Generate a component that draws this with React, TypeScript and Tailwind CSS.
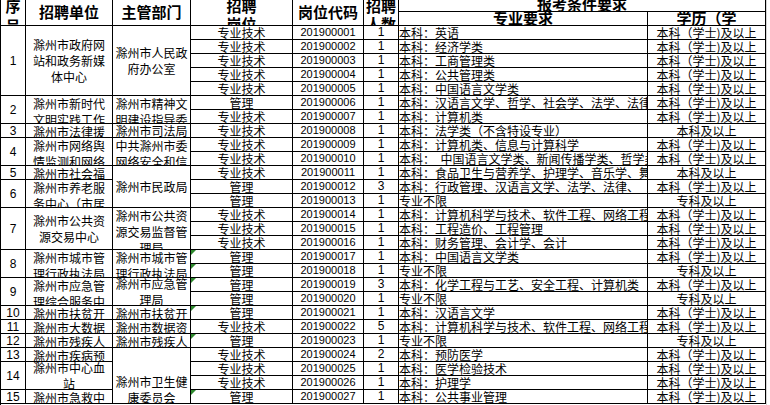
import React from "react"

type Block = { start: number; span: number; lines: string[]; top?: boolean; pt?: string }

const spanCls: Record<number, string> = {
  1: "row-span-1",
  2: "row-span-2",
  3: "row-span-3",
  4: "row-span-4",
  5: "row-span-5",
}

const seq: Block[] = [
  { start: 1, span: 5, lines: ["1"] },
  { start: 6, span: 2, lines: ["2"] },
  { start: 8, span: 1, lines: ["3"] },
  { start: 9, span: 2, lines: ["4"] },
  { start: 11, span: 1, lines: ["5"] },
  { start: 12, span: 2, lines: ["6"] },
  { start: 14, span: 3, lines: ["7"] },
  { start: 17, span: 2, lines: ["8"] },
  { start: 19, span: 2, lines: ["9"] },
  { start: 21, span: 1, lines: ["10"] },
  { start: 22, span: 1, lines: ["11"] },
  { start: 23, span: 1, lines: ["12"] },
  { start: 24, span: 1, lines: ["13"] },
  { start: 25, span: 2, lines: ["14"] },
  { start: 27, span: 1, lines: ["15"] },
]

const units: Block[] = [
  { start: 1, span: 5, lines: ["滁州市政府网", "站和政务新媒", "体中心"] },
  { start: 6, span: 2, lines: ["滁州市新时代", "文明实践工作", "指导中心"], top: true },
  { start: 8, span: 1, lines: ["滁州市法律援", "助中心"], top: true },
  { start: 9, span: 2, lines: ["滁州市网络舆", "情监测和网络", "安全中心"], top: true },
  { start: 11, span: 1, lines: ["滁州市社会福", "利院"], top: true },
  { start: 12, span: 2, lines: ["滁州市养老服", "务中心（市居", "家养老服务中", "心）"], top: true },
  { start: 14, span: 3, lines: ["滁州市公共资", "源交易中心"] },
  { start: 17, span: 2, lines: ["滁州市城市管", "理行政执法局"], top: true },
  { start: 19, span: 2, lines: ["滁州市应急管", "理综合服务中", "心"], top: true },
  { start: 21, span: 1, lines: ["滁州市扶贫开", "发服务中心"], top: true },
  { start: 22, span: 1, lines: ["滁州市大数据", "中心"], top: true },
  { start: 23, span: 1, lines: ["滁州市残疾人", "康复中心"], top: true },
  { start: 24, span: 1, lines: ["滁州市疾病预", "防控制中心"], top: true },
  { start: 25, span: 2, lines: ["滁州市中心血", "站"] },
  { start: 27, span: 1, lines: ["滁州市急救中", "心"], top: true },
]

const depts: Block[] = [
  { start: 1, span: 5, lines: ["滁州市人民政", "府办公室"] },
  { start: 6, span: 2, lines: ["滁州市精神文", "明建设指导委", "员会"], top: true },
  { start: 8, span: 1, lines: ["滁州市司法局"] },
  { start: 9, span: 2, lines: ["中共滁州市委", "网络安全和信", "息化委员会办", "公室"], top: true },
  { start: 11, span: 3, lines: ["滁州市民政局"] },
  { start: 14, span: 3, lines: ["滁州市公共资", "源交易监督管", "理局"], top: true },
  { start: 17, span: 2, lines: ["滁州市城市管", "理行政执法局"], top: true },
  { start: 19, span: 2, lines: ["滁州市应急管", "理局"] },
  { start: 21, span: 1, lines: ["滁州市扶贫开", "发办公室"], top: true },
  { start: 22, span: 1, lines: ["滁州市数据资", "源管理局"], top: true },
  { start: 23, span: 1, lines: ["滁州市残疾人", "联合会"], top: true },
  { start: 24, span: 4, lines: ["滁州市卫生健", "康委员会"], top: true, pt: "pt-[26px]" },
]

const BK = "本科（学士)及以上"
const ZK = "专科及以上"

// 岗位, 人数, 专业要求, 学历, 绿色标记
const jobs: [string, string, string, string, boolean][] = [
  ["专业技术", "1", "本科：英语", BK, false],
  ["专业技术", "1", "本科：经济学类", BK, false],
  ["专业技术", "1", "本科：工商管理类", BK, false],
  ["专业技术", "1", "本科：公共管理类", BK, false],
  ["专业技术", "1", "本科：中国语言文学类", BK, false],
  ["管理", "1", "本科：汉语言文学、哲学、社会学、法学、法律", BK, false],
  ["专业技术", "1", "本科：计算机类", BK, false],
  ["专业技术", "1", "本科：法学类（不含特设专业）", "本科及以上", false],
  ["专业技术", "1", "本科：计算机类、信息与计算科学", BK, false],
  ["专业技术", "1", "本科：  中国语言文学类、新闻传播学类、哲学类", BK, false],
  ["专业技术", "1", "本科：食品卫生与营养学、护理学、音乐学、舞蹈", "本科及以上", false],
  ["管理", "3", "本科：行政管理、汉语言文学、法学、法律、", BK, false],
  ["管理", "1", "专业不限", ZK, false],
  ["专业技术", "1", "本科：计算机科学与技术、软件工程、网络工程", BK, false],
  ["专业技术", "1", "本科：工程造价、工程管理", BK, false],
  ["专业技术", "1", "本科：财务管理、会计学、会计", BK, false],
  ["管理", "1", "本科：中国语言文学类", BK, true],
  ["管理", "1", "专业不限", ZK, true],
  ["管理", "3", "本科：化学工程与工艺、安全工程、计算机类", BK, true],
  ["管理", "1", "专业不限", ZK, false],
  ["管理", "1", "本科：汉语言文学", BK, true],
  ["专业技术", "5", "本科：计算机科学与技术、软件工程、网络工程", BK, false],
  ["管理", "1", "专业不限", ZK, true],
  ["专业技术", "2", "本科：预防医学", BK, false],
  ["专业技术", "1", "本科：医学检验技术", BK, false],
  ["专业技术", "1", "本科：护理学", BK, false],
  ["管理", "1", "本科：公共事业管理", BK, true],
]

const cell = "border-r border-b border-black overflow-hidden relative"
const num = "font-['Liberation_Sans',sans-serif]"

function BlockCell({ b, k, digits }: { b: Block; k: string; digits?: boolean }) {
  return (
    <div
      key={k}
      className={`${cell} ${spanCls[b.span]} flex flex-col items-center ${b.top ? "justify-start" : "justify-center"} ${b.pt ?? ""} ${digits ? `${num} text-[12px]` : "text-[12px]"} leading-[16px]`}
    >
      {b.lines.map((l, i) => (
        <div key={i} className="whitespace-nowrap shrink-0">
          {l}
        </div>
      ))}
    </div>
  )
}

export default function App() {
  const items: React.ReactNode[] = []

  // header
  items.push(
    <div key="h1" className={`${cell} row-span-2 flex flex-col items-center justify-start leading-[20px] text-[15px] font-bold`}>
      <div className="-mt-[4px] shrink-0">序</div>
      <div className="shrink-0">号</div>
    </div>,
    <div key="h2" className={`${cell} row-span-2 flex items-center justify-center text-[15px] font-bold`}>招聘单位</div>,
    <div key="h3" className={`${cell} row-span-2 flex items-center justify-center text-[15px] font-bold`}>主管部门</div>,
    <div key="h4" className={`${cell} row-span-2 flex flex-col items-center justify-start leading-[18px] text-[15px] font-bold`}>
      <div className="-mt-[3px] shrink-0">招聘</div>
      <div className="shrink-0">岗位</div>
    </div>,
    <div key="h5" className={`${cell} row-span-2 flex items-center justify-center text-[15px] font-bold`}>岗位代码</div>,
    <div key="h6" className={`${cell} row-span-2 flex flex-col items-center justify-start leading-[18px] text-[15px] font-bold`}>
      <div className="-mt-[3px] shrink-0">招聘</div>
      <div className="shrink-0">人数</div>
    </div>,
    <div key="h7" className={`${cell} col-span-2 flex items-end justify-center text-[15px] leading-[14px] font-bold`}>报考条件要求</div>,
    <div key="h8" className={`${cell} flex items-end justify-center text-[15px] leading-[14px] font-bold`}>专业要求</div>,
    <div key="h9" className={`${cell} flex items-end justify-center text-[15px] leading-[14px] font-bold`}>学历（学</div>
  )

  jobs.forEach(([post, count, major, edu, flag], i) => {
    const r = i + 1
    const s = seq.find((b) => b.start === r)
    const u = units.find((b) => b.start === r)
    const d = depts.find((b) => b.start === r)
    if (s) items.push(<BlockCell key={`s${r}`} k={`s${r}`} b={s} digits />)
    if (u) items.push(<BlockCell key={`u${r}`} k={`u${r}`} b={u} />)
    if (d) items.push(<BlockCell key={`d${r}`} k={`d${r}`} b={d} />)
    items.push(
      <div key={`p${r}`} className={`${cell} flex items-end justify-center text-[12px] leading-[13px]`}>
        {flag && (
          <span className="absolute left-0 top-0 w-0 h-0 border-t-[5px] border-r-[5px] border-t-[#2f8a2f] border-r-transparent" />
        )}
        <span className="whitespace-nowrap">{post}</span>
      </div>,
      <div key={`c${r}`} className={`${cell} ${num} flex items-end justify-center text-[11px] leading-[13px]`}>
        {`2019000${String(r).padStart(2, "0")}`}
      </div>,
      <div key={`n${r}`} className={`${cell} ${num} flex items-end justify-center text-[12px] leading-[13px]`}>
        {count}
      </div>,
      <div key={`m${r}`} className={`${cell} flex items-end justify-start text-[12px] leading-[13px]`}>
        <span className="whitespace-pre shrink-0">{major}</span>
      </div>,
      <div key={`e${r}`} className={`${cell} flex items-end justify-center text-[12px] leading-[13px]`}>
        <span className="whitespace-nowrap">{edu}</span>
      </div>
    )
  })

  return (
    <div className="w-[770px] h-[405px] overflow-hidden bg-white text-black font-['Noto_Sans_CJK_SC',sans-serif] flex">
      <div className="grid grid-cols-[25px_87px_78px_102px_71px_35px_249px_118px] grid-rows-[12px_14px_repeat(27,14px)] border-l border-black w-max shrink-0">
        {items}
      </div>
      <div className="flex-1 border-l border-[#d4d4d4]" />
    </div>
  )
}
